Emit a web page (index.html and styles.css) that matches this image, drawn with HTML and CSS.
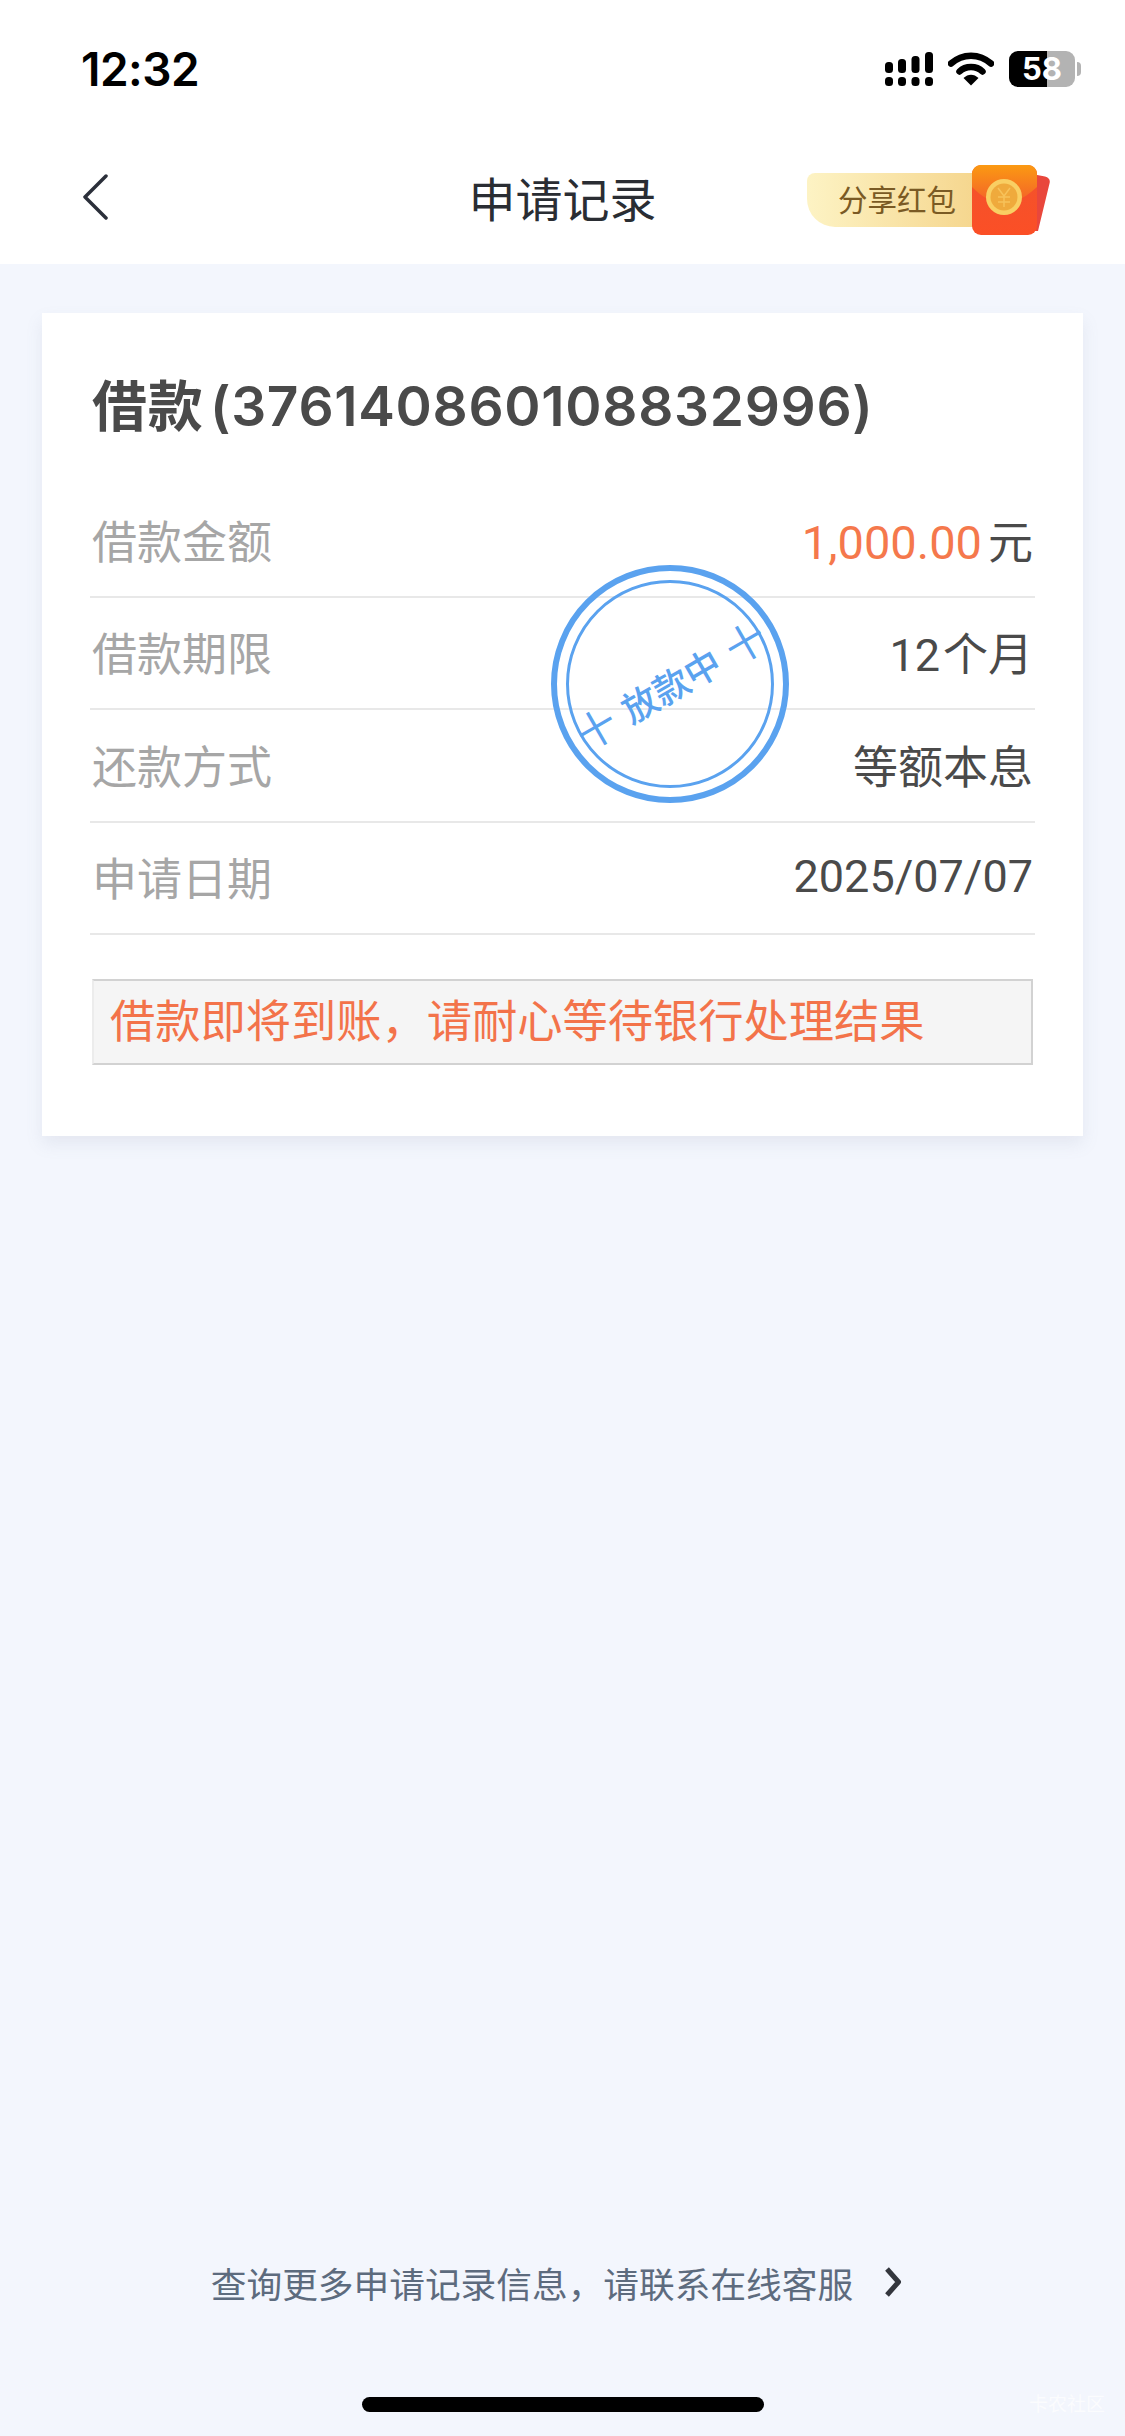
FILE: index.html
```html
<!DOCTYPE html>
<html lang="zh-CN">
<head>
  <meta charset="UTF-8" />
  <meta name="viewport" content="width=device-width, initial-scale=1.0"/>
  <title>申请记录</title>
  <link rel="stylesheet" href="styles.css">
</head>
<body>

  <div class="top">
    <div class="status">
      <span class="time">12:32</span>
      <div class="status-icons">
        <svg class="signal" width="48" height="34" viewBox="0 0 48 34">
          <rect x="0" y="10" width="8" height="11" rx="3.5"/>
          <rect x="13" y="7" width="8" height="14" rx="3.5"/>
          <rect x="26.500" y="4" width="8" height="17" rx="3.5"/>
          <rect x="40" y="0" width="8" height="21" rx="3.5"/>
          <rect x="0" y="25" width="8" height="9" rx="3.5"/>
          <rect x="13" y="25" width="8" height="9" rx="3.5"/>
          <rect x="26.500" y="25" width="8" height="9" rx="3.5"/>
          <rect x="40" y="25" width="8" height="9" rx="3.5"/>
        </svg>
        <svg class="wifi" width="46" height="34" viewBox="0 0 46 34">
          <path d="M3 11.500C14.500 1 31.500 1 43 11.500" fill="none" stroke="#000" stroke-width="6.500" stroke-linecap="round"/>
          <path d="M11.500 19.500C17.500 13.500 28.500 13.500 34.500 19.500" fill="none" stroke="#000" stroke-width="6.500" stroke-linecap="round"/>
          <path d="M15.500 26C20 21.500 26 21.500 30.500 26L23 33.500Z"/>
        </svg>
        <div class="battery"><span>58</span><i class="battery-nub"></i></div>
      </div>
    </div>

    <div class="nav">
      <a class="back" href="#">
        <svg width="26" height="46" viewBox="0 0 26 46">
          <path d="M24 2L3 23L24 44" fill="none" stroke="#2b2f3a" stroke-width="3.500" stroke-linecap="round" stroke-linejoin="round"/>
        </svg>
      </a>
      <div class="nav-title">申请记录</div>
      <a class="share" href="#">
        <span class="share-text">分享红包</span>
        <svg class="packet" width="78" height="70" viewBox="0 0 78 70">
          <defs>
            <linearGradient id="packetBody" x1="0" y1="0" x2="0" y2="1">
              <stop offset="0" stop-color="#f2532c"/>
              <stop offset="1" stop-color="#fb4f26"/>
            </linearGradient>
            <linearGradient id="packetFlap" x1="0" y1="0" x2="0" y2="1">
              <stop offset="0" stop-color="#fb9a12"/>
              <stop offset="1" stop-color="#f3602a"/>
            </linearGradient>
          </defs>
          <path d="M60 9L73 11.500C77 12.500 78.500 15 77.500 18.500L66 66H60Z" fill="#e9473c"/>
          <rect x="0" y="0" width="65" height="70" rx="9" fill="url(#packetBody)"/>
          <path d="M0 22V9C0 4 4 0 9 0H56C61 0 65 4 65 9V22C54 32 44 38 32 38C20 38 10 32 0 22Z" fill="url(#packetFlap)"/>
          <circle cx="32" cy="32" r="18" fill="#f9cf63"/>
          <circle cx="32" cy="32" r="13.500" fill="#efaa3c"/>
          <path d="M26 23L32 31L38 23M32 31V42M26 32H38M26 37H38" fill="none" stroke="#f7c25a" stroke-width="1.500"/>
        </svg>
      </a>
    </div>
  </div>

  <div class="main">
    <div class="card">
      <h2 class="card-title">借款 (376140860108832996)</h2>

      <div class="row">
        <span class="label">借款金额</span>
        <span class="value"><em class="money">1,000.00</em>元</span>
      </div>
      <div class="row">
        <span class="label">借款期限</span>
        <span class="value">12<span class="unit">个月</span></span>
      </div>
      <div class="row">
        <span class="label">还款方式</span>
        <span class="value">等额本息</span>
      </div>
      <div class="row">
        <span class="label">申请日期</span>
        <span class="value">2025/07/07</span>
      </div>

      <div class="notice">借款即将到账，请耐心等待银行处理结果</div>

      <!-- con dau nam de len cac dong -->
      <div class="stamp">
        <div class="stamp-ring">
          <div class="stamp-text"><span class="cross">十</span><span>放款中</span><span class="cross">十</span></div>
        </div>
      </div>
    </div>

    <div class="footer">
      <a class="more" href="#">
        <span>查询更多申请记录信息，请联系在线客服</span>
        <svg width="18" height="30" viewBox="0 0 18 30">
          <path d="M3 2L14.500 15L3 28" fill="none" stroke="#33363d" stroke-width="5" stroke-linejoin="round"/>
        </svg>
      </a>
      <div class="home-bar"></div>
    </div>
    <div class="watermark">卡农社区</div>
  </div>

</body>
</html>
```

FILE: styles.css
```css
* {
  box-sizing: border-box;
  margin: 0;
  padding: 0;
  font-family: Roboto, "Noto Sans CJK SC", sans-serif;
}

body {
  display: flex;
  flex-direction: column;
  height: 100vh;
  background-color: #f3f6fd;
  overflow: hidden;
}

a {
  text-decoration: none;
  color: inherit;
}

.top {
  height: 264px;
  background-color: #fff;
}

.status {
  display: flex;
  justify-content: space-between;
  align-items: center;
  height: 138px;
  padding: 0 50px 0 81px;
}

.time {
  font-family: Inter, sans-serif;
  font-size: 46px;
  font-weight: 600;
  color: #000;
  letter-spacing: -0.5px;
}

.status-icons {
  display: flex;
  align-items: center;
  gap: 15px;
}

.signal,
.wifi {
  display: block;
}

.battery {
  position: relative;
  width: 66px;
  height: 36px;
  border-radius: 9px;
  background: linear-gradient(90deg, #000 58%, #b3b3b3 58%);
  color: #fff;
  font-family: Inter, sans-serif;
  font-size: 31px;
  font-weight: 700;
  line-height: 36px;
  text-align: center;
}

.battery span {
  font-family: Inter, sans-serif;
}

.battery-nub {
  position: absolute;
  top: 11px;
  right: -6px;
  width: 4px;
  height: 14px;
  border-radius: 0 4px 4px 0;
  background-color: #b3b3b3;
}

.nav {
  display: grid;
  grid-template-columns: 1fr auto 1fr;
  align-items: center;
  height: 126px;
  padding: 0 75px 8px;
}

.back {
  display: flex;
  margin-left: 7px;
}

.nav-title {
  margin-bottom: 2px;
  font-size: 47px;
  color: #2a2d33;
}

.share {
  display: flex;
  align-items: center;
  justify-self: end;
  margin-top: 6px;
}

.share-text {
  display: block;
  width: 175px;
  height: 54px;
  margin-right: -10px;
  padding-left: 31px;
  border-radius: 8px 0 0 28px;
  background: linear-gradient(90deg, #fdf3c4, #f5d58c);
  color: #7a5a24;
  font-size: 29.500px;
  line-height: 56px;
}

.packet {
  position: relative;
  display: block;
}

.main {
  position: relative;
  display: flex;
  flex-direction: column;
  flex-grow: 1;
  padding-top: 49px;
}

.card {
  position: relative;
  margin: 0 42px;
  padding: 64px 48px 71px;
  background-color: #fff;
  box-shadow: 0 8px 16px rgba(120, 130, 160, 0.12);
}

.card-title {
  margin-bottom: 50px;
  padding-left: 2px;
  font-family: Inter, "Noto Sans CJK SC", sans-serif;
  font-size: 55px;
  font-weight: 600;
  letter-spacing: 0.7px;
  word-spacing: -8px;
  line-height: 58px;
  color: #4a4a4a;
}

.row {
  display: flex;
  justify-content: space-between;
  align-items: center;
  height: 112.500px;
  padding-bottom: 2px;
  border-bottom: 2px solid #e8e8e8;
}

.label {
  padding-left: 2px;
  font-size: 45px;
  color: #a6a6a6;
}

.value {
  padding-right: 2px;
  font-size: 45px;
  color: #4a4a4a;
}

.unit {
  margin-left: 3px;
}

.money {
  margin-right: 6px;
  font-size: 47px;
  font-style: normal;
  color: #f5784c;
}

.notice {
  height: 86px;
  margin: 44px 2px 0;
  padding-left: 16px;
  border: 2px solid #d2d2d2;
  border-left-color: #ececec;
  background-color: #f5f5f5;
  color: #f3734a;
  font-size: 45.250px;
  line-height: 84px;
}

.stamp {
  position: absolute;
  top: 252px;
  left: 509px;
  width: 238px;
  height: 238px;
  padding: 9px;
  border: 6px solid #5aa2ef;
  border-radius: 50%;
}

.stamp-ring {
  display: flex;
  justify-content: center;
  align-items: center;
  width: 100%;
  height: 100%;
  border: 3px solid #5aa2ef;
  border-radius: 50%;
}

.stamp-text {
  display: flex;
  align-items: center;
  gap: 12px;
  transform: rotate(-30deg);
  color: #5aa2ef;
  font-size: 36px;
  font-weight: 500;
  white-space: nowrap;
}

.stamp-text .cross {
  font-size: 40px;
  font-weight: 400;
}

.footer {
  display: flex;
  flex-direction: column;
  align-items: center;
  margin-top: auto;
  padding-bottom: 24px;
}

.more {
  display: flex;
  align-items: center;
  gap: 31px;
  height: 50px;
  margin: 0 12px 90px 0;
  color: #5d6b7e;
  font-size: 35.700px;
}

.home-bar {
  width: 402px;
  height: 15px;
  border-radius: 8px;
  background-color: #000;
}

.watermark {
  position: absolute;
  right: 20px;
  bottom: 20px;
  color: #fff;
  font-size: 19px;
  opacity: 0.7;
}
```
